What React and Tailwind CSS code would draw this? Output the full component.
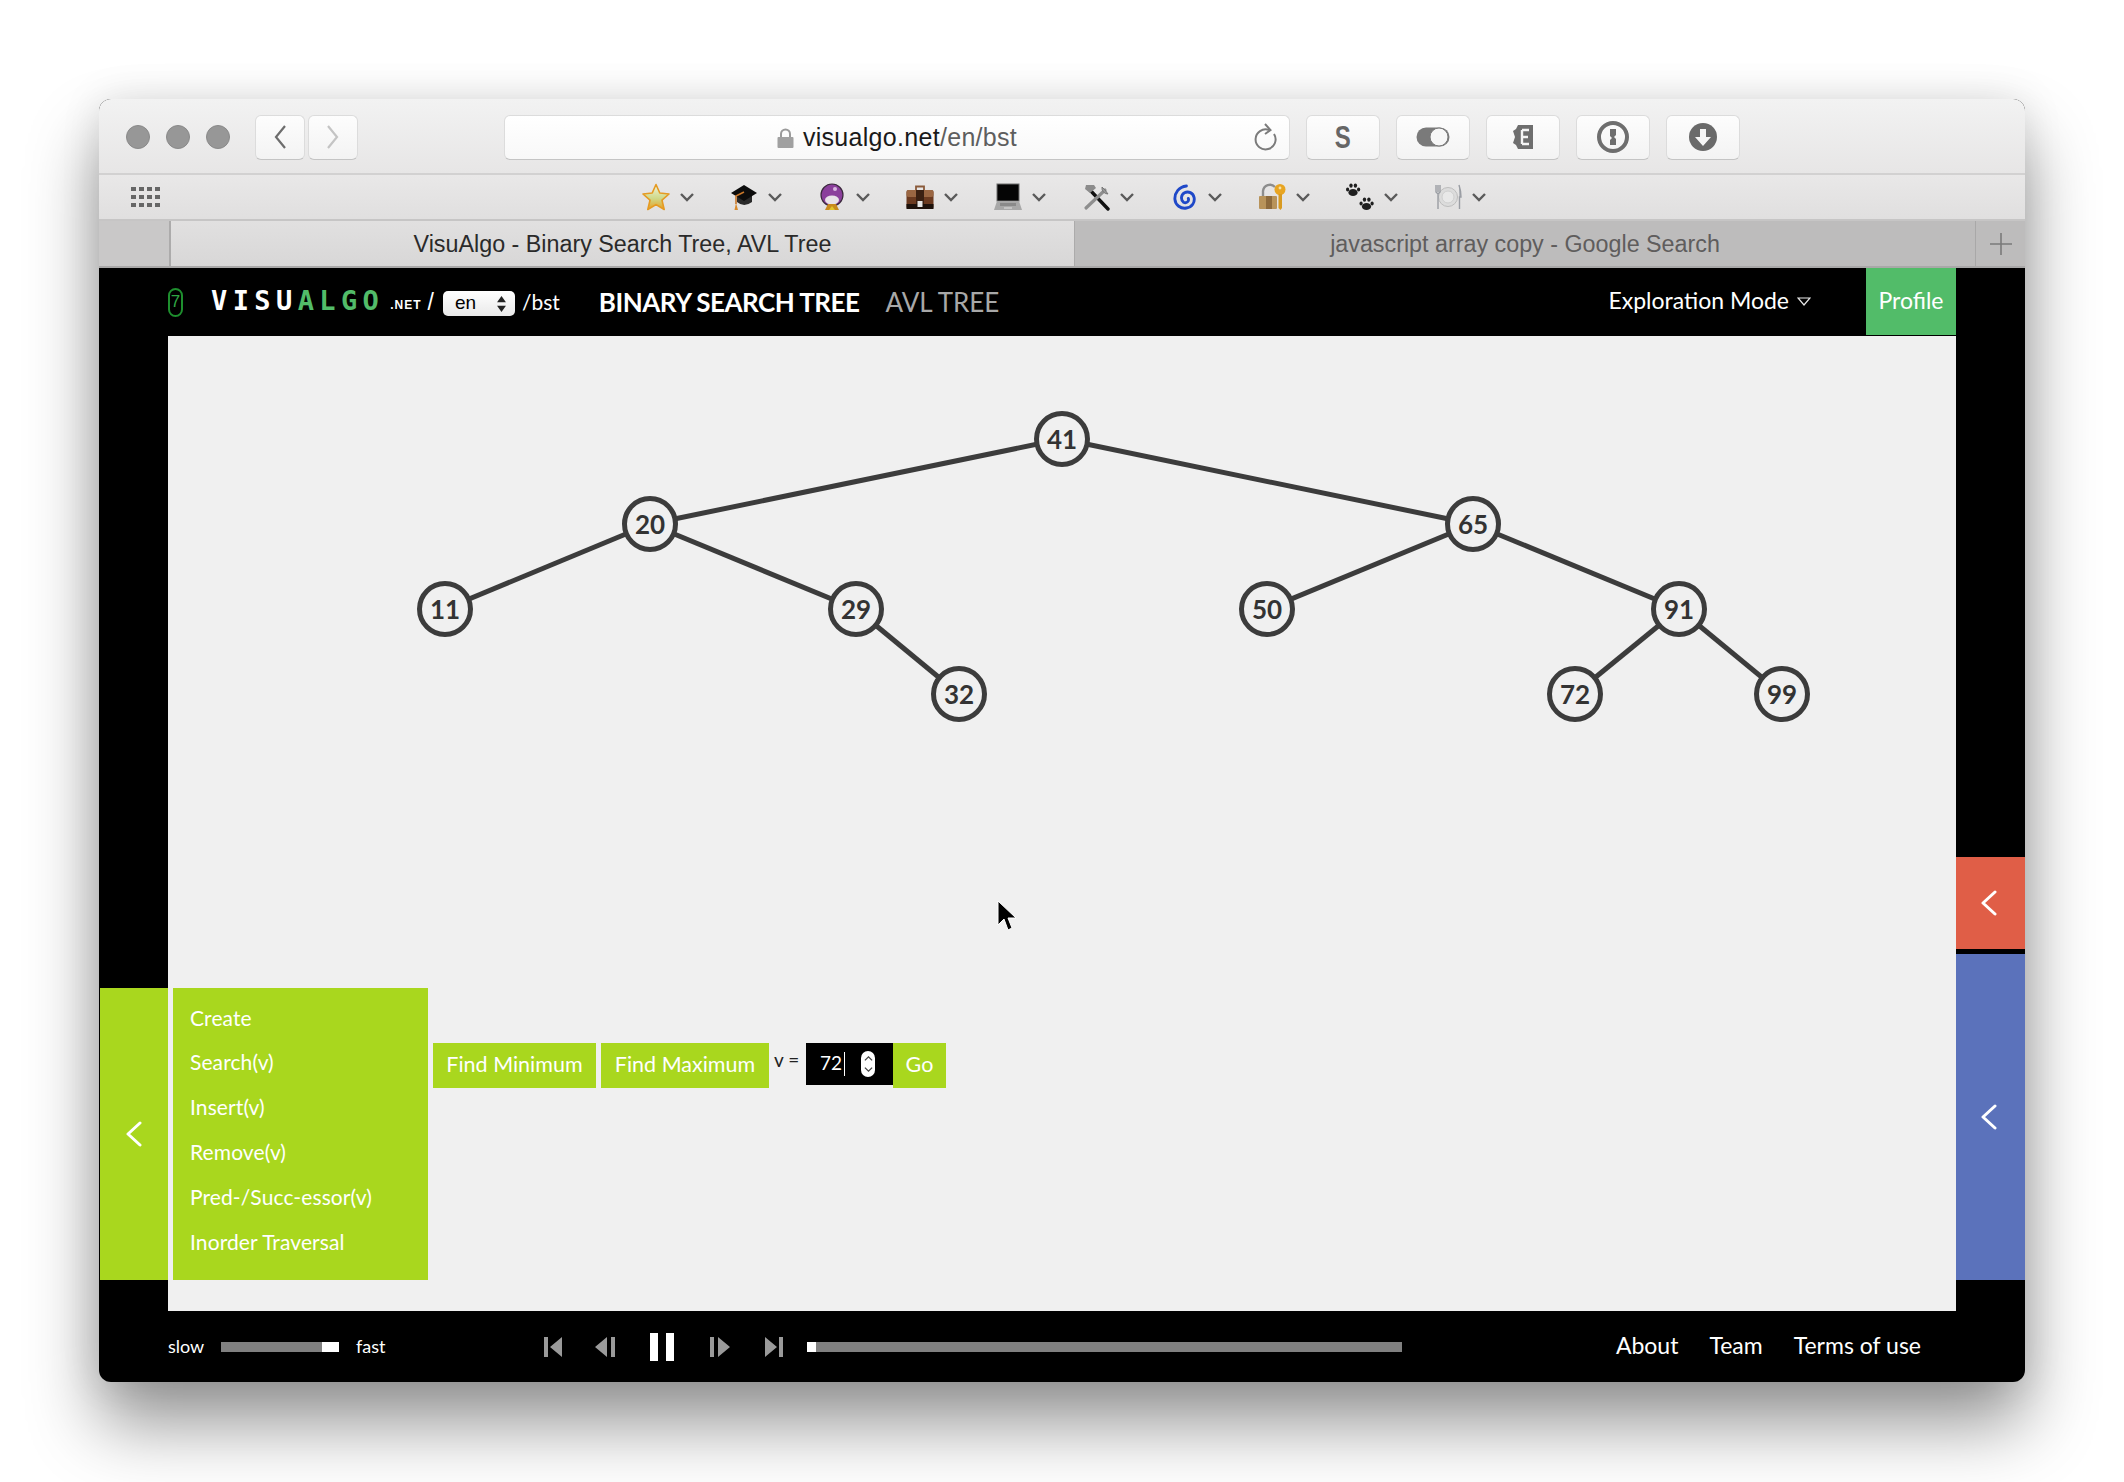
const NODES = [
  { v: 41, x: 894, y: 103 },
  { v: 20, x: 482, y: 188 },
  { v: 65, x: 1305, y: 188 },
  { v: 11, x: 277, y: 273 },
  { v: 29, x: 688, y: 273 },
  { v: 50, x: 1099, y: 273 },
  { v: 91, x: 1511, y: 273 },
  { v: 32, x: 791, y: 358 },
  { v: 72, x: 1407, y: 358 },
  { v: 99, x: 1614, y: 358 },
]

const EDGES = [[41, 20], [41, 65], [20, 11], [20, 29], [29, 32], [65, 50], [65, 91], [91, 72], [91, 99]]

const MENU = ['Create', 'Search(v)', 'Insert(v)', 'Remove(v)', 'Pred-/Succ-essor(v)', 'Inorder Traversal']

const SANS = 'font-["Lato","Noto_Sans",sans-serif]'

function Chevron({ className = 'w-[18px] h-[26px]' }) {
  return (
    <svg viewBox="0 0 18 26" className={className} fill="none" stroke="#fff" strokeWidth="3" strokeLinecap="round" strokeLinejoin="round">
      <path d="M15 2 L3 13 L15 24" />
    </svg>
  )
}

function StarIcon() {
  return (
    <svg viewBox="0 0 28 28" className="w-[28px] h-[28px]">
      <defs>
        <linearGradient id="star" x1="0" y1="0" x2="0" y2="1">
          <stop offset="0" stopColor="#f3f4d8" />
          <stop offset="0.55" stopColor="#cfd98a" />
          <stop offset="1" stopColor="#e8a020" />
        </linearGradient>
      </defs>
      <path d="M14 1.5 L17.8 10 L27 11 L20 17.2 L22.2 26.5 L14 21.6 L5.8 26.5 L8 17.2 L1 11 L10.2 10 Z" fill="url(#star)" stroke="#e59a22" strokeWidth="1.6" strokeLinejoin="round" />
    </svg>
  )
}

function CapIcon() {
  return (
    <svg viewBox="0 0 28 28" className="w-[28px] h-[28px]">
      <path d="M7 13 L7 19 Q14 25 22 19 L22 13 Z" fill="#2a2a2a" />
      <path d="M14 2 L27 10 L14 18 L1 10 Z" fill="#0c0c0c" />
      <path d="M14 9 L6 13 L6 21" fill="none" stroke="#c9772a" strokeWidth="1.6" />
      <path d="M6 20 L4.5 27 L8 27 Z" fill="#d98a2c" />
    </svg>
  )
}

function BallIcon() {
  return (
    <svg viewBox="0 0 24 28" className="w-[24px] h-[28px]">
      <circle cx="12" cy="12" r="11" fill="#8b3f9c" stroke="#3c2a3e" strokeWidth="1.2" />
      <ellipse cx="12" cy="17" rx="7" ry="4.5" fill="#e8e2e8" />
      <circle cx="15" cy="6" r="2" fill="#d9b7e0" />
      <path d="M5 27 L8 21 L16 21 L19 27 Z" fill="#c98a1e" />
      <path d="M9 27 L12 23 L15 27 Z" fill="#e0c52c" />
    </svg>
  )
}

function CaseIcon() {
  return (
    <svg viewBox="0 0 28 28" className="w-[28px] h-[28px]">
      <path d="M10 7 L10 3.5 L18 3.5 L18 7" fill="none" stroke="#8a5a3a" strokeWidth="1.8" />
      <rect x="0.5" y="7" width="27" height="19" rx="2" fill="#6b3a20" />
      <rect x="0.5" y="7" width="27" height="7" rx="2" fill="#9a6642" />
      <rect x="0.5" y="21" width="27" height="5" fill="#1e120c" />
      <rect x="10" y="7" width="8" height="14" fill="#3b2012" />
      <rect x="11.5" y="18" width="5" height="6" fill="#e6e6e6" />
    </svg>
  )
}

function LaptopIcon() {
  return (
    <svg viewBox="0 0 28 28" className="w-[28px] h-[28px]">
      <rect x="3" y="1" width="22" height="17" fill="#050505" stroke="#6e6e6e" strokeWidth="1" />
      <path d="M3 18 L25 18 L28 27 L0 27 Z" fill="#a8a8a8" />
      <rect x="6" y="20" width="16" height="3" fill="#8a8a8a" />
      <rect x="10" y="24" width="8" height="2" fill="#c4c4c4" />
    </svg>
  )
}

function ToolsIcon() {
  return (
    <svg viewBox="0 0 28 28" className="w-[28px] h-[28px]">
      <path d="M7 6 L26 26" stroke="#111" strokeWidth="3.4" strokeLinecap="round" />
      <path d="M4 2 L12 2 L14 5 L8 10 L3 6 Z" fill="#8c8c8c" />
      <path d="M23 7 L4 25" stroke="#8e8e8e" strokeWidth="3.2" strokeLinecap="round" />
      <path d="M20 4 A6 6 0 0 0 26 11 L23 7 Z" fill="#9a9a9a" stroke="#777" strokeWidth="1" />
    </svg>
  )
}

function SpiralIcon() {
  return (
    <svg viewBox="0 0 24 28" className="w-[23px] h-[27px]">
      <path d="M14 2 C6 3 1.5 9 2 16 C2.5 22 8 26 14 25 C20 24 23 19 22 14 C21 9 16 7 12 9 C8 11 8 17 11 19 C14 20.5 17 18 16 15" fill="none" stroke="#1f48c8" strokeWidth="3" strokeLinecap="round" />
    </svg>
  )
}

function LockIcon() {
  return (
    <svg viewBox="0 0 28 28" className="w-[28px] h-[28px]">
      <path d="M5 13 L5 8 A7 7 0 0 1 17 4" fill="none" stroke="#8d8d8d" strokeWidth="2.4" />
      <rect x="1" y="13" width="18" height="13" rx="1" fill="#b8935a" />
      <rect x="8" y="13" width="6" height="13" fill="#8d6a3c" />
      <circle cx="22" cy="6.5" r="5.5" fill="#e8a522" />
      <circle cx="22" cy="5" r="1.4" fill="#f5e1a8" />
      <path d="M20.5 11 L20.5 25 L22.5 27 L24 25 L24 11 Z" fill="#d89a20" />
    </svg>
  )
}

function PawIcon() {
  const paw = (
    <g fill="#1f1f1f">
      <ellipse cx="7" cy="9.5" rx="4.6" ry="3.6" />
      <ellipse cx="1.6" cy="6.5" rx="1.6" ry="2.1" />
      <ellipse cx="5" cy="2.6" rx="1.7" ry="2.2" />
      <ellipse cx="9.4" cy="2.6" rx="1.7" ry="2.2" />
      <ellipse cx="12.6" cy="6.5" rx="1.6" ry="2.1" />
    </g>
  )
  return (
    <svg viewBox="0 0 28 28" className="w-[28px] h-[28px]">
      <g>{paw}</g>
      <g transform="translate(13.5 14)">{paw}</g>
    </svg>
  )
}

function PlateIcon() {
  return (
    <svg viewBox="0 0 28 28" className="w-[28px] h-[28px]">
      <circle cx="14" cy="14" r="9.5" fill="#dcdcdc" stroke="#bdbdbd" />
      <circle cx="14" cy="14" r="6" fill="#e8e8e8" stroke="#cfcfcf" />
      <path d="M2 2 L2 9 L4 11 L4 26 M4 2 L4 9 M6 2 L6 9 L4 11" fill="none" stroke="#9a9da3" strokeWidth="1.4" />
      <path d="M25 2 Q27 8 27 14 L25.5 14 L25.5 26" fill="#a9acb2" stroke="#9a9da3" strokeWidth="1.4" />
    </svg>
  )
}

const BOOKMARKS = [StarIcon, CapIcon, BallIcon, CaseIcon, LaptopIcon, ToolsIcon, SpiralIcon, LockIcon, PawIcon, PlateIcon]

function ToolButton({ children }) {
  return (
    <div className="w-[74px] h-[45px] bg-gradient-to-b from-[#fdfdfd] to-[#f3f3f3] rounded-[6px] border border-[#dcdcdc] border-b-[#c4c4c4] flex items-center justify-center">
      {children}
    </div>
  )
}

function Toolbar() {
  return (
    <div className="h-[76px] flex items-center pt-[2px] bg-gradient-to-b from-[#f2f2f2] to-[#e7e6e6] border-b-2 border-[#d2d1d1]">
      <div className="flex gap-[16px] ml-[27px] w-[129px]">
        <span className="w-[24px] h-[24px] rounded-full bg-[#979797] border border-[#8a8a8a]" />
        <span className="w-[24px] h-[24px] rounded-full bg-[#979797] border border-[#8a8a8a]" />
        <span className="w-[24px] h-[24px] rounded-full bg-[#979797] border border-[#8a8a8a]" />
      </div>
      <div className="flex gap-[3px]">
        <div className="w-[50px] h-[45px] bg-gradient-to-b from-[#fdfdfd] to-[#f3f3f3] rounded-[6px] border border-[#dcdcdc] border-b-[#c4c4c4] flex items-center justify-center">
          <svg viewBox="0 0 14 26" className="w-[14px] h-[26px]" fill="none" stroke="#6d6d6d" strokeWidth="2.2"><path d="M12 2 L3 13 L12 24" /></svg>
        </div>
        <div className="w-[50px] h-[45px] bg-gradient-to-b from-[#fdfdfd] to-[#f3f3f3] rounded-[6px] border border-[#dcdcdc] border-b-[#c4c4c4] flex items-center justify-center">
          <svg viewBox="0 0 14 26" className="w-[14px] h-[26px]" fill="none" stroke="#c4c4c4" strokeWidth="2.2"><path d="M2 2 L11 13 L2 24" /></svg>
        </div>
      </div>
      <div className="ml-[146px] w-[786px] h-[45px] pt-[2px] bg-gradient-to-b from-[#ffffff] to-[#f8f8f8] rounded-[6px] border border-[#dcdcdc] border-b-[#c4c4c4] relative flex items-center justify-center font-['Liberation_Sans',sans-serif] text-[25px] tracking-[0.3px]">
        <svg viewBox="0 0 17 20" className="w-[17px] h-[20px] mr-[9px]">
          <path d="M4 9 L4 6 A4.5 4.5 0 0 1 13 6 L13 9" fill="none" stroke="#9a9a9a" strokeWidth="2" />
          <rect x="0.5" y="9" width="16" height="11" rx="1" fill="#a0a0a0" />
        </svg>
        <span className="text-[#1a1a1a]">visualgo.net</span>
        <span className="text-[#5e5e5e]">/en/bst</span>
        <svg viewBox="0 0 24 30" className="absolute right-[11px] top-[7px] w-[24px] h-[30px]" fill="none" stroke="#7b7b7b" strokeWidth="2">
          <path d="M15 7 A10 10 0 1 0 20 11" />
          <path d="M11 1 L16.5 7 L11 11" />
        </svg>
      </div>
      <div className="flex gap-[16px] ml-[16px]">
        <ToolButton>
          <span className="font-['Liberation_Sans',sans-serif] font-bold text-[32px] text-[#666] scale-x-75">S</span>
        </ToolButton>
        <ToolButton>
          <svg viewBox="0 0 34 20" className="w-[34px] h-[20px]">
            <rect x="0.5" y="0.5" width="33" height="19" rx="9.5" fill="#7a7a7a" />
            <circle cx="23" cy="10" r="9" fill="#f6f6f6" stroke="#7a7a7a" strokeWidth="1" />
          </svg>
        </ToolButton>
        <ToolButton>
          <svg viewBox="0 0 22 26" className="w-[22px] h-[26px]">
            <path d="M6 1 L21 1 L21 25 L6 25 L4 21 L1 19 L3 13 L1 7 L4 5 Z" fill="#6e6e6e" />
            <path d="M10 6 L17 6 M10 13 L16 13 M10 20 L17 20 M10 6 L10 20" stroke="#f4f4f4" strokeWidth="2.4" fill="none" />
          </svg>
        </ToolButton>
        <ToolButton>
          <svg viewBox="0 0 32 32" className="w-[32px] h-[32px]">
            <circle cx="16" cy="16" r="14" fill="none" stroke="#6e6e6e" strokeWidth="4" />
            <path d="M13 8 L19 8 L19 14 L17 16 L19 18 L19 24 L13 24 L13 19 L15 17 L13 15 Z" fill="#6e6e6e" />
          </svg>
        </ToolButton>
        <ToolButton>
          <svg viewBox="0 0 28 28" className="w-[28px] h-[28px]">
            <circle cx="14" cy="14" r="14" fill="#6a6a6a" />
            <path d="M11 6 L17 6 L17 14 L22 14 L14 23 L6 14 L11 14 Z" fill="#f6f6f6" />
          </svg>
        </ToolButton>
      </div>
    </div>
  )
}

function BookmarksBar() {
  return (
    <div className="h-[46px] flex items-center bg-gradient-to-b from-[#e9e8e8] to-[#e0dfdf] border-b-2 border-[#c6c5c5]">
      <div className="grid grid-cols-[repeat(4,5px)] gap-x-[3px] gap-y-[4px] ml-[32px] w-[29px] shrink-0">
        {Array.from({ length: 12 }).map((_, i) => (
          <span key={i} className="w-[5px] h-[4px] bg-[#666]" />
        ))}
      </div>
      <div className="flex gap-[36px] ml-[482px]">
        {BOOKMARKS.map((Icon, i) => (
          <div key={i} className="flex items-center gap-[10px]">
            <div className="w-[28px] h-[28px] flex items-center justify-center"><Icon /></div>
            <svg viewBox="0 0 14 9" className="w-[14px] h-[9px]" fill="none" stroke="#5a5a5a" strokeWidth="2.4"><path d="M1 1 L7 7 L13 1" /></svg>
          </div>
        ))}
      </div>
    </div>
  )
}

function TabStrip() {
  return (
    <div className="h-[47px] flex bg-[#bdbcbc] border-b-2 border-[#a9a8a8] font-['Liberation_Sans',sans-serif] text-[23.3px]">
      <div className="w-[72px] bg-[#c9c8c8] border-r-2 border-[#acabab]" />
      <div className="w-[904px] pt-[1px] bg-gradient-to-b from-[#e1e0e0] to-[#d8d7d7] flex items-center justify-center text-[#2a2a2a] border-r border-[#acabab]">
        VisuAlgo - Binary Search Tree, AVL Tree
      </div>
      <div className="w-[901px] pt-[1px] flex items-center justify-center text-[#5f5d5d] border-r border-[#a9a8a8]">
        javascript array copy - Google Search
      </div>
      <div className="flex-1 flex items-center justify-center">
        <svg viewBox="0 0 22 22" className="w-[22px] h-[22px]" stroke="#7a7a7a" strokeWidth="1.6"><path d="M11 0 L11 22 M0 11 L22 11" /></svg>
      </div>
    </div>
  )
}

function Header() {
  return (
    <div className="h-[68px] flex items-center pl-[69px] pr-[69px] text-white">
      <div className="w-[15px] h-[29px] rounded-full border-2 border-[#1e8f2e] flex items-center justify-center text-[#2fa744] text-[17px] font-['Liberation_Sans',sans-serif]">7</div>
      <div className="ml-[28px] mb-[3px] flex items-baseline font-['DejaVu_Sans_Mono',monospace] font-bold text-[27px] leading-none tracking-[5.4px]">
        <span className="text-white">VISU</span>
        <span className="text-[#52bc69]">ALGO</span>
      </div>
      <span className="ml-[6px] mt-[6px] text-[12px] font-bold tracking-[1px] font-['Liberation_Sans',sans-serif]">.NET</span>
      <span className="ml-[6px] text-[23px] font-['Liberation_Sans',sans-serif] font-light">/</span>
      <div className="ml-[9px] w-[72px] h-[25px] mt-[3px] bg-gradient-to-b from-[#ffffff] to-[#e9e9e9] rounded-[5px] flex items-center justify-between pl-[12px] pr-[9px] text-black text-[19px] font-['Liberation_Sans',sans-serif]">
        <span>en</span>
        <svg viewBox="0 0 10 18" className="w-[9px] h-[16px]" fill="#222"><path d="M5 0 L10 7 L0 7 Z M5 18 L0 11 L10 11 Z" /></svg>
      </div>
      <span className={`ml-[7px] text-[21px] ${SANS}`}>/bst</span>
      <span className={`ml-[39px] text-[26px] font-bold tracking-[-0.5px] ${SANS}`}>BINARY SEARCH TREE</span>
      <span className={`ml-[26px] text-[26px] text-[#a8a8a8] ${SANS}`}>AVL TREE</span>
      <div className={`ml-auto pb-[3px] flex items-center text-[23px] ${SANS}`}>
        <span>Exploration Mode</span>
        <svg viewBox="0 0 14 9" className="ml-[8px] mt-[2px] w-[14px] h-[9px]" fill="none" stroke="#e8e8e8" strokeWidth="1.2"><path d="M1 1 L13 1 L7 8 Z" /></svg>
      </div>
      <div className={`ml-[55px] w-[90px] h-[67px] self-start bg-[#52bc69] flex items-center justify-center text-[23px] pb-[2px] ${SANS}`}>Profile</div>
    </div>
  )
}

function TreeCanvas() {
  const pos = Object.fromEntries(NODES.map(n => [n.v, n]))
  return (
    <svg viewBox="0 0 1788 975" className="w-full h-full block">
      {EDGES.map(([a, b]) => (
        <line key={`${a}-${b}`} x1={pos[a].x} y1={pos[a].y} x2={pos[b].x} y2={pos[b].y} stroke="#3c3c3c" strokeWidth="5" />
      ))}
      {NODES.map(n => (
        <g key={n.v}>
          <circle cx={n.x} cy={n.y} r="25.5" fill="#f0f0f0" stroke="#3c3c3c" strokeWidth="5" />
          <text x={n.x} y={n.y + 9.5} textAnchor="middle" fontFamily="Lato, sans-serif" fontWeight="700" fontSize="26" fill="#333">{n.v}</text>
        </g>
      ))}
    </svg>
  )
}

function ActionBtn({ children, className }) {
  return (
    <div className={`h-[45px] bg-[#a9d71e] text-white text-[21.5px] pb-[3px] flex items-center justify-center ${SANS} ${className}`}>{children}</div>
  )
}

function ActionPanel() {
  return (
    <div className="absolute left-[-68px] bottom-[31px] h-[292px] flex items-start">
      <div className="w-[68px] h-full bg-[#a9d71e] flex items-center justify-center">
        <Chevron />
      </div>
      <div className={`ml-[5px] w-[255px] h-full bg-[#a9d71e] pl-[17px] pt-[7px] text-white text-[21px] tracking-[0.1px] ${SANS}`}>
        {MENU.map(m => (
          <div key={m} className="h-[44.8px] flex items-center">{m}</div>
        ))}
      </div>
      <ActionBtn className="ml-[5px] mt-[55px] w-[163px]">Find Minimum</ActionBtn>
      <ActionBtn className="ml-[5px] mt-[55px] w-[168px]">Find Maximum</ActionBtn>
      <span className={`ml-[5px] mt-[58px] w-[32px] text-[19px] text-[#222] ${SANS}`}>v =</span>
      <div className="mt-[55px] w-[87px] h-[42px] bg-black text-white flex items-center pl-[14px]">
        <span className={`text-[19px] pb-[2px] ${SANS}`}>72</span>
        <span className="w-[1px] h-[24px] bg-white ml-[2px]" />
        <div className="ml-[16px] w-[14px] h-[26px] bg-white rounded-full flex items-center justify-center">
          <svg viewBox="0 0 10 20" className="w-[9px] h-[18px]" fill="none" stroke="#444" strokeWidth="1.4"><path d="M1 6 L5 2 L9 6 M1 14 L5 18 L9 14" /></svg>
        </div>
      </div>
      <ActionBtn className="mt-[55px] w-[53px]">Go</ActionBtn>
    </div>
  )
}

function SideTabs() {
  return (
    <div className="w-[69px] flex flex-col">
      <div className="h-[521px]" />
      <div className="h-[92px] bg-[#e05e47] flex items-center justify-center pr-[4px]"><Chevron /></div>
      <div className="h-[5px]" />
      <div className="h-[326px] bg-[#5b72bb] flex items-center justify-center pr-[4px]"><Chevron /></div>
    </div>
  )
}

function Footer() {
  return (
    <div className={`h-[71px] flex items-center pl-[69px] pr-[104px] text-white ${SANS}`}>
      <span className="w-[53px] text-[18px]">slow</span>
      <div className="w-[118px] h-[10px] bg-[#808080] flex justify-end">
        <span className="w-[17px] h-full bg-white" />
      </div>
      <span className="ml-[17px] w-[188px] text-[18px]">fast</span>
      <svg viewBox="0 0 18 20" className="w-[18px] h-[20px]" fill="#9a9a9a"><path d="M0 0 H4 V20 H0 Z M18 0 V20 L6 10 Z" /></svg>
      <svg viewBox="0 0 21 20" className="ml-[33px] w-[21px] h-[20px]" fill="#9a9a9a"><path d="M12 0 V20 L0 10 Z M16 0 H20 V20 H16 Z" /></svg>
      <div className="ml-[34px] w-[24px] h-[28px] flex justify-between">
        <span className="w-[8px] h-full bg-white" />
        <span className="w-[8px] h-full bg-white" />
      </div>
      <svg viewBox="0 0 21 20" className="ml-[35px] w-[21px] h-[20px]" fill="#9a9a9a"><path d="M1 0 H5 V20 H1 Z M9 0 V20 L21 10 Z" /></svg>
      <svg viewBox="0 0 18 20" className="ml-[35px] w-[18px] h-[20px]" fill="#9a9a9a"><path d="M0 0 V20 L12 10 Z M14 0 H18 V20 H14 Z" /></svg>
      <div className="ml-[24px] w-[595px] h-[10px] bg-[#808080]">
        <span className="block w-[9px] h-full bg-white" />
      </div>
      <div className="ml-auto flex gap-[31px] text-[23px] pb-[2px]">
        <span>About</span>
        <span>Team</span>
        <span>Terms of use</span>
      </div>
    </div>
  )
}

export default function App() {
  return (
    <div className="w-[2124px] h-[1482px] bg-white pt-[99px] pl-[99px] overflow-hidden">
      <div className="w-[1926px] h-[1283px] rounded-[12px] flex flex-col bg-black shadow-[0_42px_70px_rgba(0,0,0,0.42),0_0_40px_rgba(0,0,0,0.10)]">
        <div className="rounded-t-[12px] overflow-hidden">
          <Toolbar />
          <BookmarksBar />
          <TabStrip />
        </div>
        <Header />
        <div className="flex h-[975px]">
          <div className="w-[69px]" />
          <div className="relative w-[1788px] bg-[#f0f0f0]">
            <TreeCanvas />
            <ActionPanel />
            <svg viewBox="0 0 20 32" className="absolute left-[829px] top-[564px] w-[20px] h-[32px]">
              <path d="M1 1 L1 25 L7 19 L11 30 L15 28 L11 18 L19 18 Z" fill="#000" stroke="#fff" strokeWidth="1" />
            </svg>
          </div>
          <SideTabs />
        </div>
        <Footer />
      </div>
    </div>
  )
}
